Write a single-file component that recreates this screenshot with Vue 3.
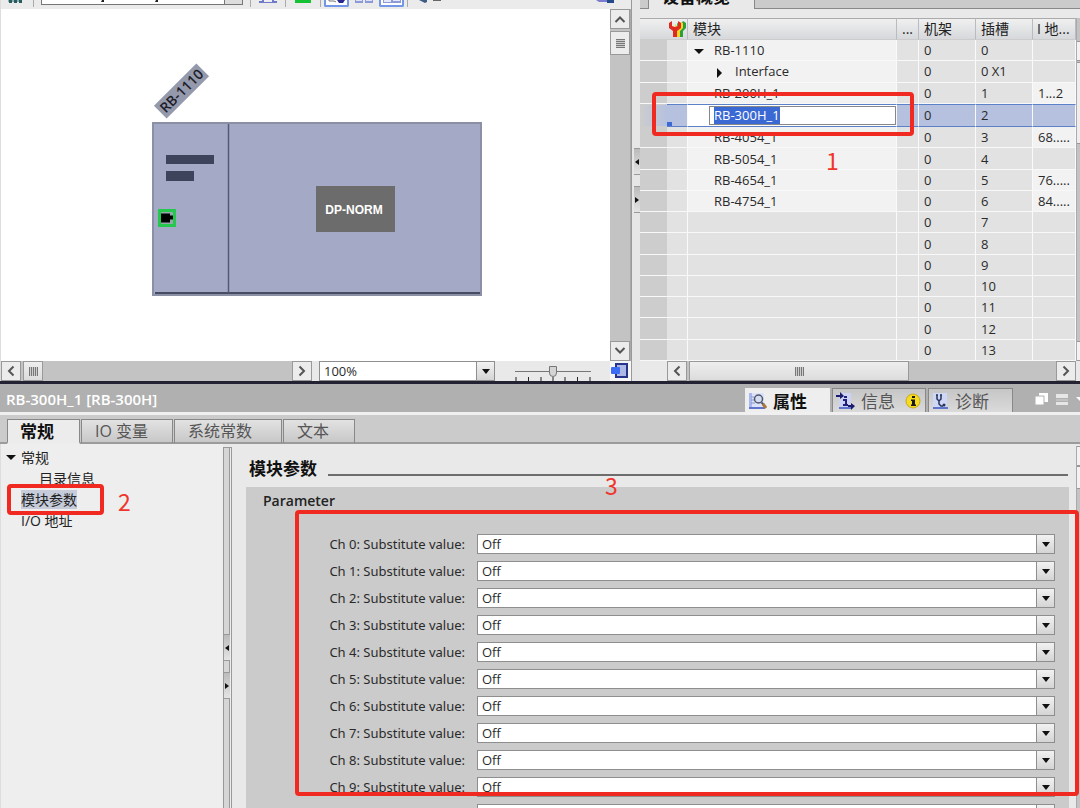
<script setup>
import { onMounted, ref } from 'vue'

const rows = [
  { name: 'RB-1110', level: 0, mark: 'open', rack: '0', slot: '0', addr: '' },
  { name: 'Interface', level: 1, mark: 'closed', rack: '0', slot: '0 X1', addr: '' },
  { name: 'RB-200H_1', level: 0, rack: '0', slot: '1', addr: '1...2' },
  { name: 'RB-300H_1', level: 0, rack: '0', slot: '2', addr: '', editing: true },
  { name: 'RB-4054_1', level: 0, rack: '0', slot: '3', addr: '68.....' },
  { name: 'RB-5054_1', level: 0, rack: '0', slot: '4', addr: '' },
  { name: 'RB-4654_1', level: 0, rack: '0', slot: '5', addr: '76.....' },
  { name: 'RB-4754_1', level: 0, rack: '0', slot: '6', addr: '84.....' },
  ...['7', '8', '9', '10', '11', '12', '13'].map((slot) => ({ name: '', rack: '0', slot, addr: '' })),
]
const channels = Array.from({ length: 11 }, (_, i) => i)
const tabs = ['常规', 'IO 变量', '系统常数', '文本']

const moduleName = ref('RB-300H_1')
const zoomLevel = ref(50)
const nameField = ref(null)
const setField = (el) => { nameField.value = el }
onMounted(() => {
  nameField.value?.focus({ preventScroll: true })
  nameField.value?.select()
})
</script>

<template>
  <main class="app">
    <section class="upper">
      <div class="device">
        <div class="toolbar">
          <svg class="t-net" width="14" height="9"><path d="M0 0h14v2H0z" fill="#8fb0b0" /><path d="M1 0h3v3H1zM6 0h3v3H6zM11 0h3v3h-3z" fill="#2b5c60" /></svg>
          <i class="sep"></i>
          <div class="device-select"><svg width="120" height="4"><path d="M60 0h2v2h-3zM114 0h2v2h-3z" fill="#222" /></svg><b></b></div>
          <i class="sep"></i>
          <svg class="t-icon" width="18" height="9"><path d="M0 3V1h3V0h2v2h8V0h2v1h3v2z" fill="#6f7acb" /><path d="M5 0h3v1H5zM10 0h3v1h-3z" fill="#eef" /></svg>
          <i class="sep"></i>
          <svg class="t-icon" width="18" height="9"><path d="M1 0h16v3H1z" fill="#14c234" /></svg>
          <i class="sep"></i>
          <button class="t-btn" type="button" aria-label="100%"><svg width="18" height="5"><path d="M1 0v1h5l2 1" fill="none" stroke="#777" /><path d="M9 0h8l-2 3h-4z" fill="#29298f" /></svg></button>
          <svg class="t-tiles" width="18" height="9"><path d="M0 0h8v3H0zM10 0h8v3h-8z" fill="#8e9ad6" /><path d="M1 0h6v1H1zM11 0h6v1h-6z" fill="#dde3f8" /></svg>
          <button class="t-btn" type="button" aria-label="100%"><svg width="18" height="5"><path d="M0 0h18v3H0z" fill="#8e9ad6" /><path d="M1 0h7v2H1zM10 0h7v1h-7z" fill="#e4e8fa" /></svg></button>
          <i class="sep"></i>
          <svg class="t-lens" width="30" height="9"><path d="M5 0l6 3 2-1V0z" fill="#3e5d85" /><path d="M19 0h8v1h-8z" fill="#666" /></svg>
          <svg class="t-end" width="19" height="9"><path d="M0 0h11v2H3z" fill="#7c7bd0" /><path d="M11 0h7v3h-7z" fill="#234a86" /></svg>
        </div>

        <div class="stage">
          <svg class="drawing" viewBox="0 9 610 352" width="610" height="352" role="img" aria-label="RB-1110">
            <g transform="translate(181.500 91) rotate(-45)">
              <rect x="-30" y="-9" width="60" height="18" fill="#9599ac" />
              <text x="0" y="5" text-anchor="middle" class="rack-name">RB-1110</text>
            </g>
            <rect x="153" y="123" width="328" height="172" fill="#a4a9c5" stroke="#8b90a6" stroke-width="2" />
            <path d="M155 293h325" stroke="#474c62" stroke-width="2" />
            <path d="M228.500 124v169" stroke="#555a73" stroke-width="1.500" />
            <path d="M166 155h48v9h-48zM166 171h28v10h-28z" fill="#3c435a" />
            <rect x="159.500" y="210.500" width="15" height="15" fill="#96a8a9" stroke="#24c84c" stroke-width="3" />
            <path d="M161 213.500h9v2h3v4h-3v3h-9z" fill="#000" />
            <path d="M316 186h79v46h-79z" fill="#6c6c6c" />
            <text x="354" y="214" text-anchor="middle" class="norm">DP-NORM</text>
          </svg>
          <div class="vscroll">
            <button type="button" class="sb" aria-label="▲"><svg width="12" height="8"><path d="M1.500 7L6 2.500 10.500 7" /></svg></button>
            <div class="vthumb"><i></i></div>
            <div class="fill"></div>
            <button type="button" class="sb" aria-label="▼"><svg width="12" height="8"><path d="M1.500 1L6 5.500 10.500 1" /></svg></button>
          </div>
        </div>

        <div class="statusbar">
          <div class="hscroll">
            <button type="button" class="sb" aria-label="◀"><svg width="8" height="12"><path d="M6.500 1.500L2 6l4.500 4.500" /></svg></button>
            <div class="hthumb small"><i></i></div>
            <div class="fill"></div>
            <button type="button" class="sb" aria-label="▶"><svg width="8" height="12"><path d="M1.500 1.500L6 6l-4.500 4.500" /></svg></button>
          </div>
          <span class="combo zoom"><select aria-label="100%"><option>100%</option></select><i class="drop"></i></span>
          <div class="slider">
            <input v-model="zoomLevel" type="range" min="0" max="100" aria-label="100%" />
            <svg width="76" height="4"><path d="M1 0v4M13.500 0v4M26 0v4M38 0v4M50 0v4M62.500 0v4M75 0v4" stroke="#222" /></svg>
          </div>
          <button type="button" class="overview" aria-label="100%">
            <svg width="20" height="18"><rect x="6" y="2" width="11" height="13" fill="#aeb8e6" stroke="#26348c" stroke-width="2" /><rect x="1" y="5" width="9" height="7" rx="1" fill="#3c6cf2" /></svg>
          </button>
        </div>
      </div>

      <div class="split top-split"><button type="button" class="grip left" aria-label="◂"></button><button type="button" class="grip right" aria-label="▸"></button></div>

      <div class="overview-pane">
        <div class="overview-tabs"><div class="overview-tab">设备概览</div></div>
        <div class="tablearea">
          <table>
            <colgroup><col class="c-sel" /><col class="c-tool" /><col /><col class="c-more" /><col class="c-num" /><col class="c-num" /><col class="c-addr" /></colgroup>
            <thead>
              <tr>
                <th></th>
                <th class="tool">
                  <svg width="19" height="18" viewBox="0 0 19 18">
                    <path d="M9 3l3 2 3-4 3 2v5l-3 3v6h-5z" fill="#29a138" />
                    <path d="M7 4l3 3 3-5 2 1v5l-3 3v6H8z" fill="#f5d625" />
                    <path d="M4 1L1 3v5l4 3v6h4v-6l4-3V3l-3-2v5L7 7 4 6z" fill="#df2a22" />
                  </svg>
                </th>
                <th class="name">模块</th><th class="more">...</th><th>机架</th><th>插槽</th><th class="addr-head">I 地...</th>
              </tr>
            </thead>
            <tbody>
              <tr v-for="row in rows" :key="row.slot" :class="{ used: row.name, active: row.editing }">
                <td class="sel"></td>
                <td class="tool"><i v-if="row.editing" class="handle"></i></td>
                <td class="name" :class="{ child: row.level === 1 }">
                  <input v-if="row.editing" :ref="setField" v-model="moduleName" type="text" aria-label="模块" />
                  <template v-else><i v-if="row.mark" class="tri" :class="row.mark"></i><span>{{ row.name }}</span></template>
                </td>
                <td></td>
                <td>{{ row.rack }}</td>
                <td>{{ row.slot }}</td>
                <td class="addr" :class="{ lit: row.addr }">{{ row.addr }}</td>
              </tr>
            </tbody>
          </table>
          <div class="edge-scroll"><i class="e-btn"></i><i class="e-thumb"></i><i class="fill"></i><i class="e-btn"></i></div>
        </div>
        <div class="hscroll table-scroll">
          <button type="button" class="sb" aria-label="◀"><svg width="8" height="12"><path d="M6.500 1.500L2 6l4.500 4.500" /></svg></button>
          <div class="hthumb wide"><i></i></div>
          <div class="fill"></div>
          <button type="button" class="sb" aria-label="▶"><svg width="8" height="12"><path d="M1.500 1.500L6 6l-4.500 4.500" /></svg></button>
        </div>
        <div class="mark box-one"></div>
        <span class="digit digit-one">1</span>
      </div>
    </section>

    <section class="inspector">
      <header class="titlebar">
        <h1>RB-300H_1 [RB-300H]</h1>
        <nav class="views">
          <button type="button" class="view current">
            <svg width="19" height="18"><path d="M1 1h15v16H1z" fill="#dbe2fa" /><path d="M1 1h3v16H1z" fill="#a9b7ee" /><path d="M1 16h16" stroke="#5f74cc" stroke-width="2" /><path d="M3 5h3M3 8h3M3 11h4" stroke="#8b98c4" /><circle cx="10.500" cy="7" r="4" fill="#d5def0" stroke="#4f566c" stroke-width="1.500" /><path d="M13.500 10.500l2 2" stroke="#4f566c" stroke-width="2" /><path d="M15 12l3 4" stroke="#a5793f" stroke-width="3" /></svg>
            <span>属性</span>
          </button>
          <button type="button" class="view info">
            <svg width="19" height="18"><path d="M3 1h12v15H3z" fill="#cbd2f4" /><path d="M3 16h13" stroke="#5f74cc" stroke-width="2" /><path d="M0 3h4V0l4 4-4 3V5H0zM12 13h3v-2l4 3-4 4v-3h-3z" fill="#1b1b6c" /><path d="M7 7h4v5h1v2H7v-2h2V9H7zM8 4h3v2H8z" fill="#20207a" /></svg>
            <span>信息</span>
            <svg width="16" height="16"><circle cx="8" cy="8" r="7" fill="#f6dc21" stroke="#c9a91c" /><path d="M6 6.500h4v5h1V13H6v-1.500h1V8H6zM7 3h3v2H7z" fill="#1b1b1b" /></svg>
          </button>
          <button type="button" class="view diag">
            <svg width="15" height="18"><path d="M0 1h14v15H0z" fill="#cfd7f7" /><path d="M0 16h15" stroke="#5f74cc" stroke-width="2" /><path d="M4 3v4l2 2 2-2V3M3 3h2M7 3h2M6 9v3l2 2h2" fill="none" stroke="#27335c" stroke-width="1.500" /><circle cx="11" cy="13" r="1.500" fill="#27335c" /></svg>
            <span>诊断</span>
          </button>
        </nav>
        <div class="winbtns">
          <svg width="46" height="16"><path d="M5 2h9v9H5z" fill="#fff" /><path d="M1 5h9v9H1z" fill="#fff" stroke="#b0b0b0" /><path d="M22 3h12v4H22zM22 11h12v3H22z" fill="#e6e6e6" /><path d="M22 9h12" stroke="#d5d5d5" /><path d="M42 6h8l-4 4z" fill="#fff" /></svg>
        </div>
      </header>

      <nav class="tabs">
        <button v-for="(t, i) in tabs" :key="t" type="button" class="tab" :class="{ current: i === 0 }">{{ t }}</button>
      </nav>

      <div class="content">
        <aside class="tree">
          <ul>
            <li><i class="tri open"></i><span>常规</span></li>
            <li class="nested"><span>目录信息</span></li>
            <li><span class="chosen">模块参数</span></li>
            <li><span>I/O 地址</span></li>
          </ul>
          <div class="mark box-two"></div>
          <span class="digit digit-two">2</span>
        </aside>
        <div class="split low-split"><button type="button" class="grip left" aria-label="◂"></button><button type="button" class="grip right" aria-label="▸"></button></div>
        <div class="details">
          <h2><span>模块参数</span><i></i></h2>
          <div class="panel">
            <h3>Parameter</h3>
            <div v-for="c in channels" :key="c" class="field">
              <label :for="'ch' + c">Ch {{ c }}: Substitute value:</label>
              <span class="combo"><select :id="'ch' + c"><option>Off</option></select><i class="drop"></i></span>
            </div>
          </div>
          <div class="mark box-three"></div>
          <span class="digit digit-three">3</span>
        </div>
        <div class="edge-scroll low-edge"><i class="e-btn"></i><i class="e-btn"></i><i class="fill"></i></div>
      </div>
    </section>
  </main>
</template>

<style>
html, body { background: #cbcbcb; }
body { margin: 0; overflow: hidden; }
</style>

<style scoped>
* { box-sizing: border-box; }
.app {
  height: 100vh;
  display: flex;
  flex-direction: column;
  overflow: hidden;
  color: #2a2a2a;
  font-family: "Open Sans", "Noto Sans CJK SC", sans-serif;
  font-size: 13px;
}
button, input, select { font: inherit; color: inherit; margin: 0; padding: 0; border-radius: 0; outline: none; }
svg { display: block; flex: none; }
.fill { flex: 1; }

/* upper half */
.upper {
  display: grid;
  grid-template-columns: minmax(0, 631fr) 9px minmax(0, 440fr);
  flex: none;
  border-bottom: 3px solid #222233;
  background: #e9e9e9;
}
.device { display: flex; flex-direction: column; min-width: 0; border-left: 1px solid #ddd; }
.toolbar { height: 9px; overflow: hidden; display: flex; align-items: flex-start; background: #ebebeb; padding-left: 7px; }
.sep { width: 1px; height: 7px; margin: 0 7px; background: #aaa; flex: none; }
.t-net { margin-right: 4px; }
.device-select { width: 202px; height: 5px; border: 1px solid #777; border-top: 0; background: #fff; display: flex; justify-content: space-between; flex: none; }
.device-select b { width: 18px; height: 4px; background: #ddd; border-left: 1px solid #777; }
.t-icon { margin: 0 1px; }
.t-btn { width: 25px; height: 7px; border: 2px solid #7397e6; border-top: 0; border-radius: 0 0 2px 2px; background: #fff; display: flex; justify-content: center; align-items: flex-start; margin-left: -4px; flex: none; }
.t-tiles { margin: 0 10px 0 6px; }
.t-btn + .sep { margin: 0 6px 0 3px; }
.t-end { margin-left: auto; margin-right: 16px; }
.stage { flex: 1; display: flex; background: #fff; min-height: 0; overflow: hidden; }
.drawing { flex: none; margin-right: auto; margin-left: -1px; }
.rack-name { font-size: 14px; font-weight: 600; fill: #1c2028; }
.norm { font-family: "Liberation Sans", Arial, sans-serif; font-size: 12px; font-weight: 700; fill: #fff; }
.vscroll { width: 21px; flex: none; display: flex; flex-direction: column; background: #c3c3c3; border-right: 1px solid #aaa; }
.sb { width: 20px; height: 20px; flex: none; display: flex; align-items: center; justify-content: center; background: #ececec; border: 1px solid #999; }
.sb path { fill: none; stroke: #555; stroke-width: 2; }
.vthumb { height: 24px; margin-top: 2px; background: #ececec; border: 1px solid #999; display: flex; align-items: center; justify-content: center; }
.vthumb i { width: 9px; height: 9px; background: repeating-linear-gradient(#777 0 1px, #ccc 1px 2px); }
.hthumb { height: 20px; background: linear-gradient(#eee, #dcdcdc); border: 1px solid #999; display: flex; align-items: center; justify-content: center; margin-left: 2px; }
.hthumb i { width: 9px; height: 9px; background: repeating-linear-gradient(90deg, #777 0 1px, #ccc 1px 2px); }
.hthumb.small { width: 20px; }
.hthumb.wide { width: 220px; }
.hscroll { display: flex; background: #c3c3c3; height: 20px; min-width: 0; }
.statusbar { display: flex; height: 20px; flex: none; }
.statusbar .hscroll { flex: 1; }
.combo { display: grid; background: #fff; border: 1px solid #8e8e8e; height: 20px; min-width: 0; }
.combo select { grid-area: 1 / 1; appearance: none; border: 0; background: transparent; width: 100%; padding: 0 22px 0 4px; line-height: 18px; }
.combo .drop { grid-area: 1 / 1; justify-self: end; width: 18px; border-left: 1px solid #8e8e8e; background: linear-gradient(#f2f2f2, #d4d4d4); pointer-events: none; display: flex; align-items: center; justify-content: center; }
.drop::after { content: ""; border: 4px solid transparent; border-top: 5px solid #111; border-bottom: 0; }
.zoom { width: 176px; margin: 0 20px 0 7px; }
.slider { width: 76px; margin-right: 19px; padding-top: 5px; flex: none; }
.slider input { display: block; appearance: none; width: 76px; height: 11px; background: linear-gradient(#777, #777) center / 100% 1px no-repeat; }
.slider input::-webkit-slider-thumb { appearance: none; width: 8px; height: 11px; border: 1px solid #777; border-radius: 0 0 4px 4px; background: #d4d4d4; }
.overview { width: 21px; height: 20px; border: 0; background: #f6f6f6; flex: none; }

/* splitters */
.split { display: flex; flex-direction: column; gap: 11px; background: #e6e6e6; }
.grip { width: 6px; height: 27px; border: 0; border-top: 1px solid #999; border-bottom: 1px solid #999; background: linear-gradient(#bbb, #e4e4e4); display: flex; align-items: center; justify-content: center; }
.grip::after { content: ""; border: 3px solid transparent; }
.grip.left::after { border-right: 4px solid #111; border-left: 0; }
.grip.right::after { border-left: 4px solid #111; border-right: 0; }
.top-split { align-items: flex-end; padding-top: 148px; border-left: 1px solid #999; }
.low-split { width: 9px; flex: none; margin-top: 3px; border: 1px solid #999; border-bottom: 0; padding-top: 186px; background: linear-gradient(90deg, #d6d6d6 5px, #999 5px 6px, #eee 6px); }

/* module table */
.overview-pane { position: relative; min-width: 0; display: flex; flex-direction: column; }
.overview-tabs { height: 18px; display: flex; align-items: flex-start; background: linear-gradient(#cbcbcb 8px, #888 8px 9px, #e9e9e9 9px); }
.overview-tab { height: 9px; margin-left: 8px; width: 107px; padding-left: 13px; background: #e9e9e9; border: 1px solid #888; border-width: 0 1px; font-size: 17px; font-weight: 700; line-height: 24px; display: flex; align-items: flex-end; color: #111; overflow: hidden; }
.tablearea { display: flex; height: 343px; }
table { flex: 1; width: 100%; height: 343px; table-layout: fixed; border-collapse: separate; border-spacing: 0; background: #e2e2e2; min-width: 0; }
.c-sel { width: 27px; }
.c-tool { width: 21px; }
.c-more { width: 22px; }
.c-num { width: 57px; }
.c-addr { width: 43px; }
th, td { padding: 0 0 0 5px; text-align: left; white-space: nowrap; overflow: hidden; border-right: 1px solid #fafafa; border-bottom: 1px solid #f8f8f8; line-height: 18px; }
th { height: 22px; font-size: 14px; font-weight: 400; color: #222; background: linear-gradient(#f0f0f0, #d6d8db); border-top: 1px solid #aaa; border-right: 1px solid #b8bcc2; border-bottom-color: #ccc; }
th:first-child { border-right: 0; }
th.tool, td.tool { padding: 0; }
th.tool svg { margin: auto; }
th.name { padding-left: 5px; }
th.addr-head { padding-left: 4px; }
td.sel { background: #cdcdcd; border-right: 0; }
td.tool { vertical-align: bottom; }
td.name { padding: 0 0 0 26px; }
td.name.child { padding-left: 47px; }
.used td.name, td.lit { background: #f2f2f2; }
.tri { display: inline-block; width: 0; height: 0; }
.tri.open { border: 5px solid transparent; border-top: 5px solid #111; border-bottom: 0; }
.tri.closed { border: 5px solid transparent; border-left: 5px solid #111; border-right: 0; }
td .tri { vertical-align: middle; }
td .tri.open { margin-left: -20px; margin-right: 10px; }
td .tri.closed { margin-left: -18px; margin-right: 13px; }
.active td { background: #b5c1de; border-top: 1px solid #5b82c8; border-bottom: 1px solid #5b82c8; }
.active td.sel { background: linear-gradient(90deg, #cdcdcd, #b5c1de); border-color: #ccc; }
.active td.name { background: #fff; padding: 0 0 0 21px; }
.active input { display: block; width: 100%; height: 19px; border: 1px solid #888; background: #fff; padding-left: 4px; }
.active input::selection { background: #3b69d4; color: #fff; }
.handle { display: block; width: 5px; height: 4px; background: #3b69d4; }
.edge-scroll { width: 4px; flex: none; display: flex; flex-direction: column; background: #c3c3c3; border-left: 1px solid #aaa; }
.tablearea .edge-scroll { padding-top: 23px; }
.e-btn { height: 20px; background: #f2f2f2; border: 1px solid #999; border-width: 1px 0; }
.e-thumb { height: 82px; margin-top: 1px; background: #eee; border: 1px solid #999; border-width: 1px 0; }
.table-scroll { margin: 0 4px 0 27px; }

/* annotations */
.mark { position: absolute; border: 4px solid #f02a20; border-radius: 4px; pointer-events: none; }
.digit { position: absolute; color: #f0352b; font: 23px/24px "Noto Sans CJK SC", sans-serif; }
.box-one { left: 12px; top: 92px; width: 262px; height: 44px; }
.digit-one { left: 186px; top: 148px; }
.box-two { left: 6px; top: 40px; width: 97px; height: 31px; }
.digit-two { left: 117px; top: 45px; }
.box-three { left: 63px; right: -3px; top: 66px; height: 286px; }
.digit-three { left: 373px; top: 29px; }

/* inspector */
.inspector { flex: 1; min-height: 0; display: flex; flex-direction: column; background: #cbcbcb; }
.titlebar { height: 31px; flex: none; display: flex; align-items: flex-end; background: #b0b0b0; border-bottom: 3px solid #f0f0f0; padding-left: 6px; }
h1 { margin: 0 auto 0 0; font-size: 15px; line-height: 26px; font-weight: 600; color: #fff; white-space: nowrap; }
.views { display: flex; gap: 2px; }
.view { height: 24px; width: 85px; display: flex; align-items: center; gap: 6px; padding-left: 2px; border: 1px solid #888; border-bottom: 0; background: linear-gradient(#c6c6c6, #dadada); font-size: 17px; color: #555; white-space: nowrap; }
.view.info { width: 94px; padding-left: 3px; }
.view.info span { margin-right: 4px; }
.view.diag { padding-left: 4px; gap: 7px; }
.view.current { background: #eee; border-color: #eee; font-weight: 700; color: #111; }
.winbtns { width: 67px; padding: 0 0 5px 21px; overflow: hidden; }
.tabs { height: 29px; flex: none; display: grid; grid-template-columns: 73px 92px 108px 72px; align-items: end; column-gap: 1px; padding-left: 7px; box-shadow: inset 0 -2px #9b9b9b; }
.tab { height: 25px; padding: 0 0 0 13px; text-align: left; border: 1px solid #888; border-bottom: 2px solid #9b9b9b; background: linear-gradient(#e2e2e2, #c8c8c8); font-size: 16px; line-height: 21px; color: #555; white-space: nowrap; }
.tab.current { font-size: 17px; font-weight: 700; color: #111; background: #ececec; border-bottom-color: #ececec; padding-left: 12px; }
.content { flex: 1; min-height: 0; display: flex; background: #e9e9e9; }
.tree { position: relative; width: 223px; flex: none; background: #eee; border-left: 1px solid #ddd; }
.tree ul { list-style: none; margin: 0; padding: 3px 0 0 20px; }
.tree li { height: 21px; line-height: 21px; font-size: 14px; display: flex; align-items: center; color: #222; white-space: nowrap; }
.tree li .tri { margin: 0 5px 0 -15px; }
.tree .nested { padding-left: 18px; }
.chosen { background: #c6ccda; line-height: 19px; }
.details { position: relative; flex: 1; min-width: 0; padding: 14px 7px 0 14px; overflow: visible; }
h2 { margin: 0 0 8px 3px; display: flex; gap: 11px; font-size: 17px; line-height: 21px; font-weight: 700; color: #111; }
h2 i { flex: 1; height: 2px; background: #6d6d6d; margin: 16px 1px 0 0; }
.panel { background: #cbcbcb; height: 340px; padding: 3px 14px 0 17px; }
h3 { margin: 0 0 22px; font-size: 14px; line-height: 22px; font-weight: 600; color: #222; }
.field { display: grid; grid-template-columns: 202px minmax(0, 1fr); column-gap: 12px; height: 20px; margin-bottom: 7px; align-items: center; }
.field label { text-align: right; line-height: 20px; white-space: nowrap; font-family: "Noto Sans", "Open Sans", sans-serif; }
.low-edge { margin-top: 2px; }
.low-edge .e-btn + .e-btn { height: 23px; }
</style>
